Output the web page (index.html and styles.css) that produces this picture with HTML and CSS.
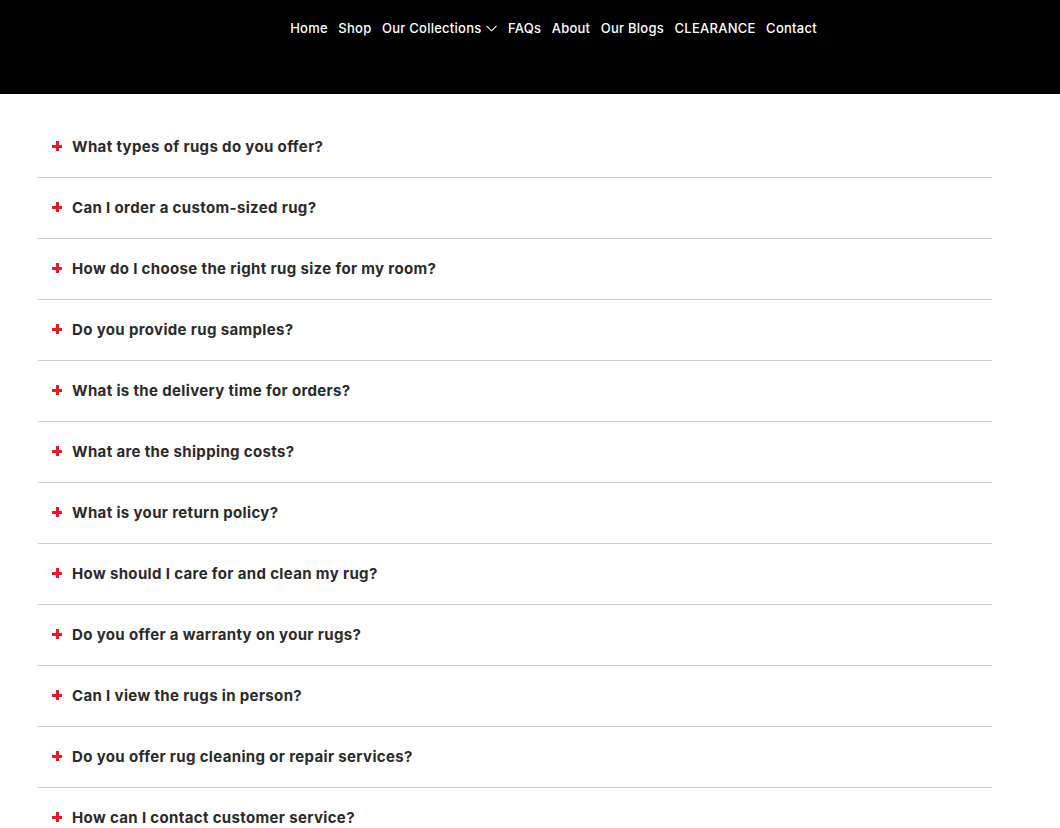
FILE: index.html
```html
<!DOCTYPE html>
<html lang="en">
<head>
    <meta charset="UTF-8">
    <meta name="viewport" content="width=device-width, initial-scale=1.0">
    <title>FAQs</title>
    <link rel="stylesheet" href="styles.css">
</head>
<body>

    <!-- Header -->
    <div class="header">
        <ul class="nav">
            <li>Home</li>
            <li>Shop</li>
            <li class="has-sub">Our Collections
                <svg class="chev" width="11" height="7" viewBox="0 0 11 7"><path d="M0.5 0.8 L5.5 5.8 L10.5 0.8" fill="none" stroke="#fff" stroke-width="1.1"/></svg>
            </li>
            <li>FAQs</li>
            <li>About</li>
            <li>Our Blogs</li>
            <li>CLEARANCE</li>
            <li>Contact</li>
        </ul>
    </div>

    <!-- FAQ -->
    <div class="faq">
        <div class="faq-item"><span class="plus"></span>What types of rugs do you offer?</div>
        <div class="faq-item"><span class="plus"></span>Can I order a custom-sized rug?</div>
        <div class="faq-item"><span class="plus"></span>How do I choose the right rug size for my room?</div>
        <div class="faq-item"><span class="plus"></span>Do you provide rug samples?</div>
        <div class="faq-item"><span class="plus"></span>What is the delivery time for orders?</div>
        <div class="faq-item"><span class="plus"></span>What are the shipping costs?</div>
        <div class="faq-item"><span class="plus"></span>What is your return policy?</div>
        <div class="faq-item"><span class="plus"></span>How should I care for and clean my rug?</div>
        <div class="faq-item"><span class="plus"></span>Do you offer a warranty on your rugs?</div>
        <div class="faq-item"><span class="plus"></span>Can I view the rugs in person?</div>
        <div class="faq-item"><span class="plus"></span>Do you offer rug cleaning or repair services?</div>
        <div class="faq-item"><span class="plus"></span>How can I contact customer service?</div>
    </div>

</body>
</html>
```

FILE: styles.css
```css
body {
    font-family: "Inter", "Open Sans", sans-serif;
    margin: 0;
    padding: 0;
    background-color: #fff;
    color: #2a2a2a;
}
/* Header */
.header {
    background-color: #000;
    height: 94px;
}
.nav {
    list-style-type: none;
    margin: 0;
    padding: 20px 0 0 47px;
    display: flex;
    justify-content: center;
    gap: 10.5px;
}
.nav li {
    color: #fff;
    font-size: 13px;
    font-weight: 500;
    letter-spacing: 0.25px;
    line-height: 17px;
    cursor: pointer;
}
.has-sub {
    display: flex;
    align-items: center;
    gap: 5px;
}
/* FAQ */
.faq {
    width: 954px;
    margin: 23px 0 0 38px;
}
.faq-item {
    box-sizing: border-box;
    display: flex;
    align-items: center;
    height: 61px;
    padding: 0 0 2px 14px;
    border-bottom: 1px solid #cfcfcf;
    font-size: 15px;
    font-weight: 700;
    letter-spacing: 0.35px;
    cursor: pointer;
}
.plus {
    position: relative;
    width: 10px;
    height: 10px;
    margin-right: 10px;
}
.plus::before, .plus::after {
    content: "";
    position: absolute;
    background-color: #e31b2b;
}
.plus::before {
    left: 0;
    top: 4px;
    width: 10px;
    height: 3px;
}
.plus::after {
    left: 3.5px;
    top: 0;
    width: 3px;
    height: 10px;
}
```
